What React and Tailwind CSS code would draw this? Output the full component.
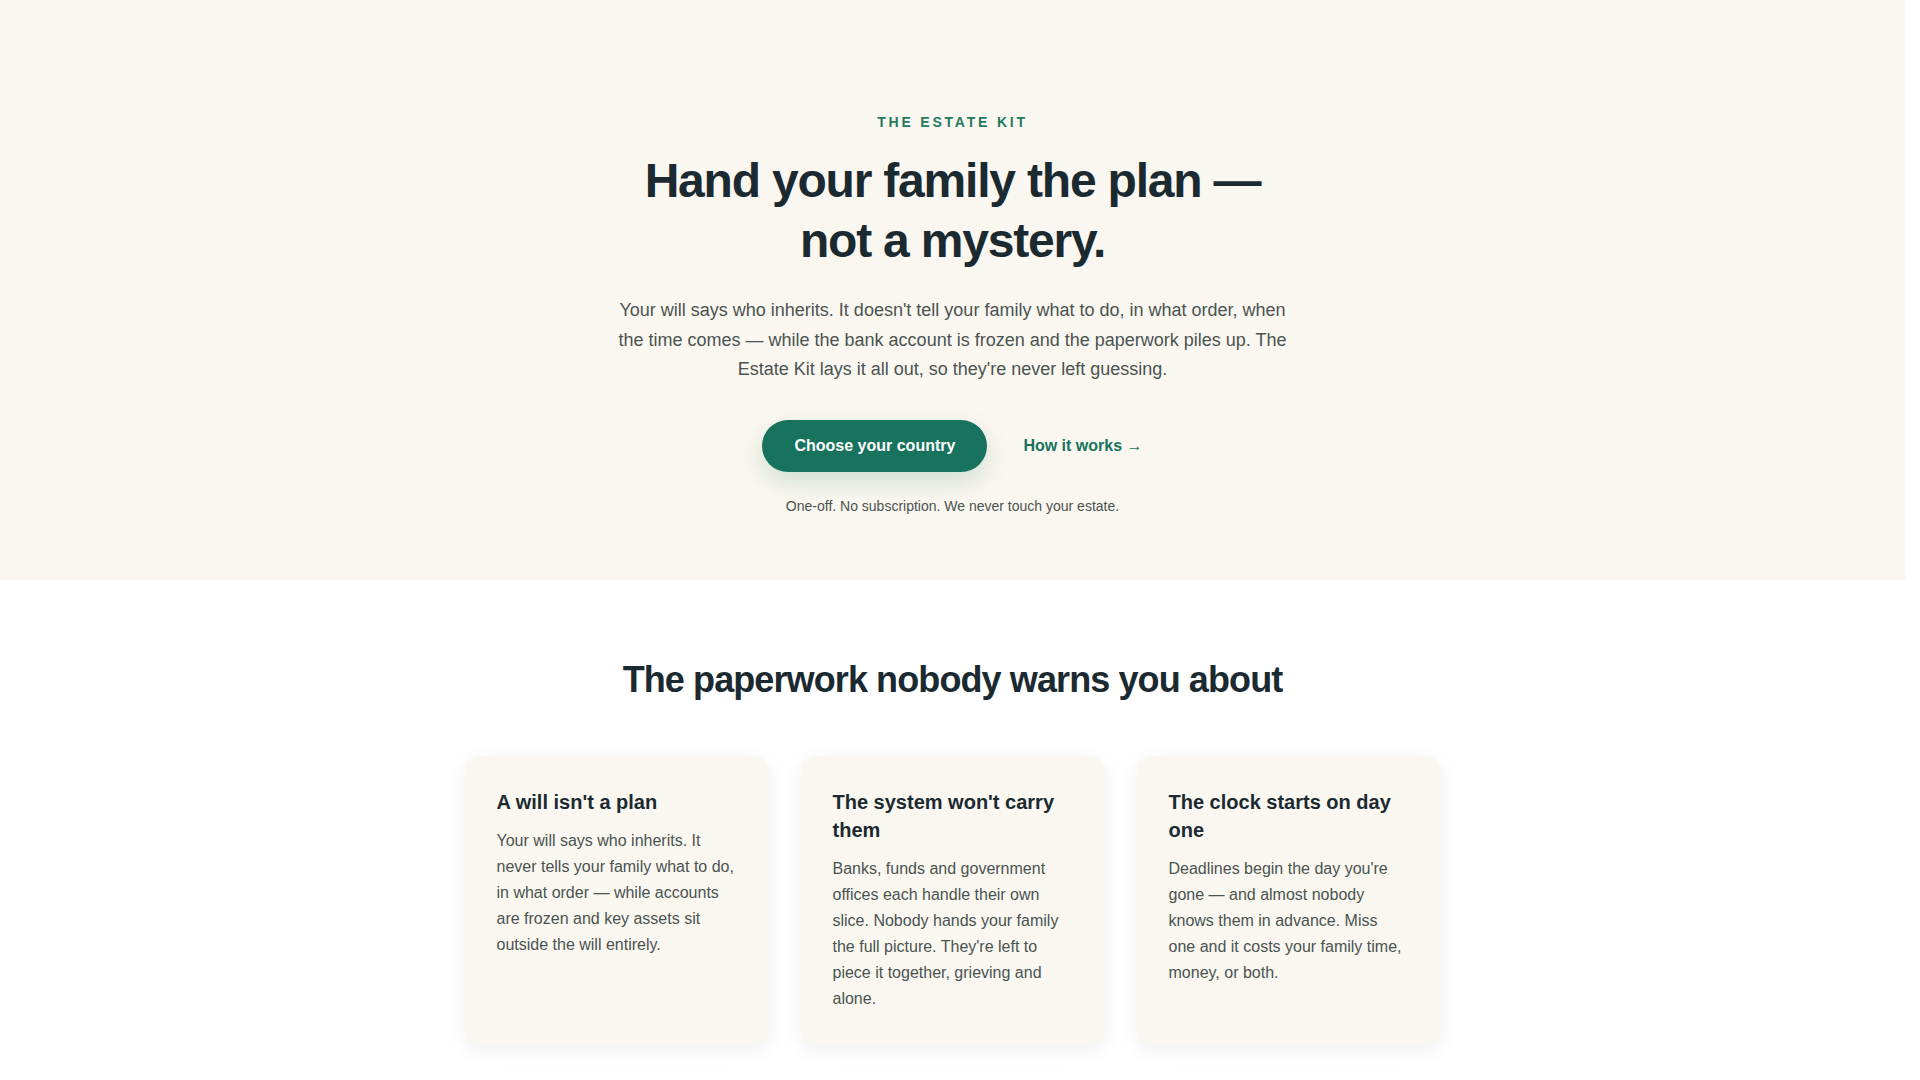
const cards = [
  {
    title: "A will isn't a plan",
    body: 'Your will says who inherits. It never tells your family what to do, in what order — while accounts are frozen and key assets sit outside the will entirely.',
  },
  {
    title: "The system won't carry them",
    body: "Banks, funds and government offices each handle their own slice. Nobody hands your family the full picture. They're left to piece it together, grieving and alone.",
  },
  {
    title: 'The clock starts on day one',
    body: "Deadlines begin the day you're gone — and almost nobody knows them in advance. Miss one and it costs your family time, money, or both.",
  },
];

export default function App() {
  return (
    <div className="min-h-screen bg-white font-['Liberation_Sans',Arial,sans-serif] text-[#1b2a30]">
      <div className="mr-[15px]">
        <section className="bg-[#faf7f0] px-6 pt-28 pb-16">
          <div className="mx-auto max-w-3xl text-center">
            <p className="mb-[19px] text-[14px] font-bold uppercase leading-5 tracking-[0.2em] text-[#1f7a5f]">
              The Estate Kit
            </p>
            <h1 className="mx-auto mb-[25px] max-w-[660px] text-[48px] font-bold leading-[60px] tracking-[-0.025em]">
              Hand your family the plan — not a mystery.
            </h1>
            <p className="mx-auto max-w-[672px] text-[18px] leading-[29.5px] text-[#4a5350]">
              Your will says who inherits. It doesn't tell your family what to do, in what order, when the
              time comes — while the bank account is frozen and the paperwork piles up. The Estate Kit lays
              it all out, so they're never left guessing.
            </p>
            <div className="mt-[35px] flex items-center justify-center gap-9">
              <a
                href="#"
                className="flex h-[52px] items-center rounded-full bg-[#17725e] px-8 text-[16px] font-bold text-white shadow-[0_10px_24px_rgba(23,114,94,0.18)]"
              >
                Choose your country
              </a>
              <a href="#" className="text-[16px] font-bold text-[#17725e]">
                How it works →
              </a>
            </div>
            <p className="mt-6 text-[14px] leading-5 text-[#4a5350]">
              One-off. No subscription. We never touch your estate.
            </p>
          </div>
        </section>

        <section className="px-6 pt-20 pb-24">
          <div className="mx-auto max-w-[976px]">
            <h2 className="mb-14 text-center text-[36px] font-bold leading-10 tracking-[-0.025em]">
              The paperwork nobody warns you about
            </h2>
            <div className="grid grid-cols-3 gap-8">
              {cards.map((c) => (
                <div
                  key={c.title}
                  className="rounded-2xl bg-[#faf7f0] p-8 shadow-[0_6px_20px_rgba(30,40,30,0.07)]"
                >
                  <h3 className="mb-3 text-[20px] font-bold leading-7">{c.title}</h3>
                  <p className="text-[16px] leading-[26px] text-[#4a5350]">{c.body}</p>
                </div>
              ))}
            </div>
          </div>
        </section>
      </div>
    </div>
  );
}
